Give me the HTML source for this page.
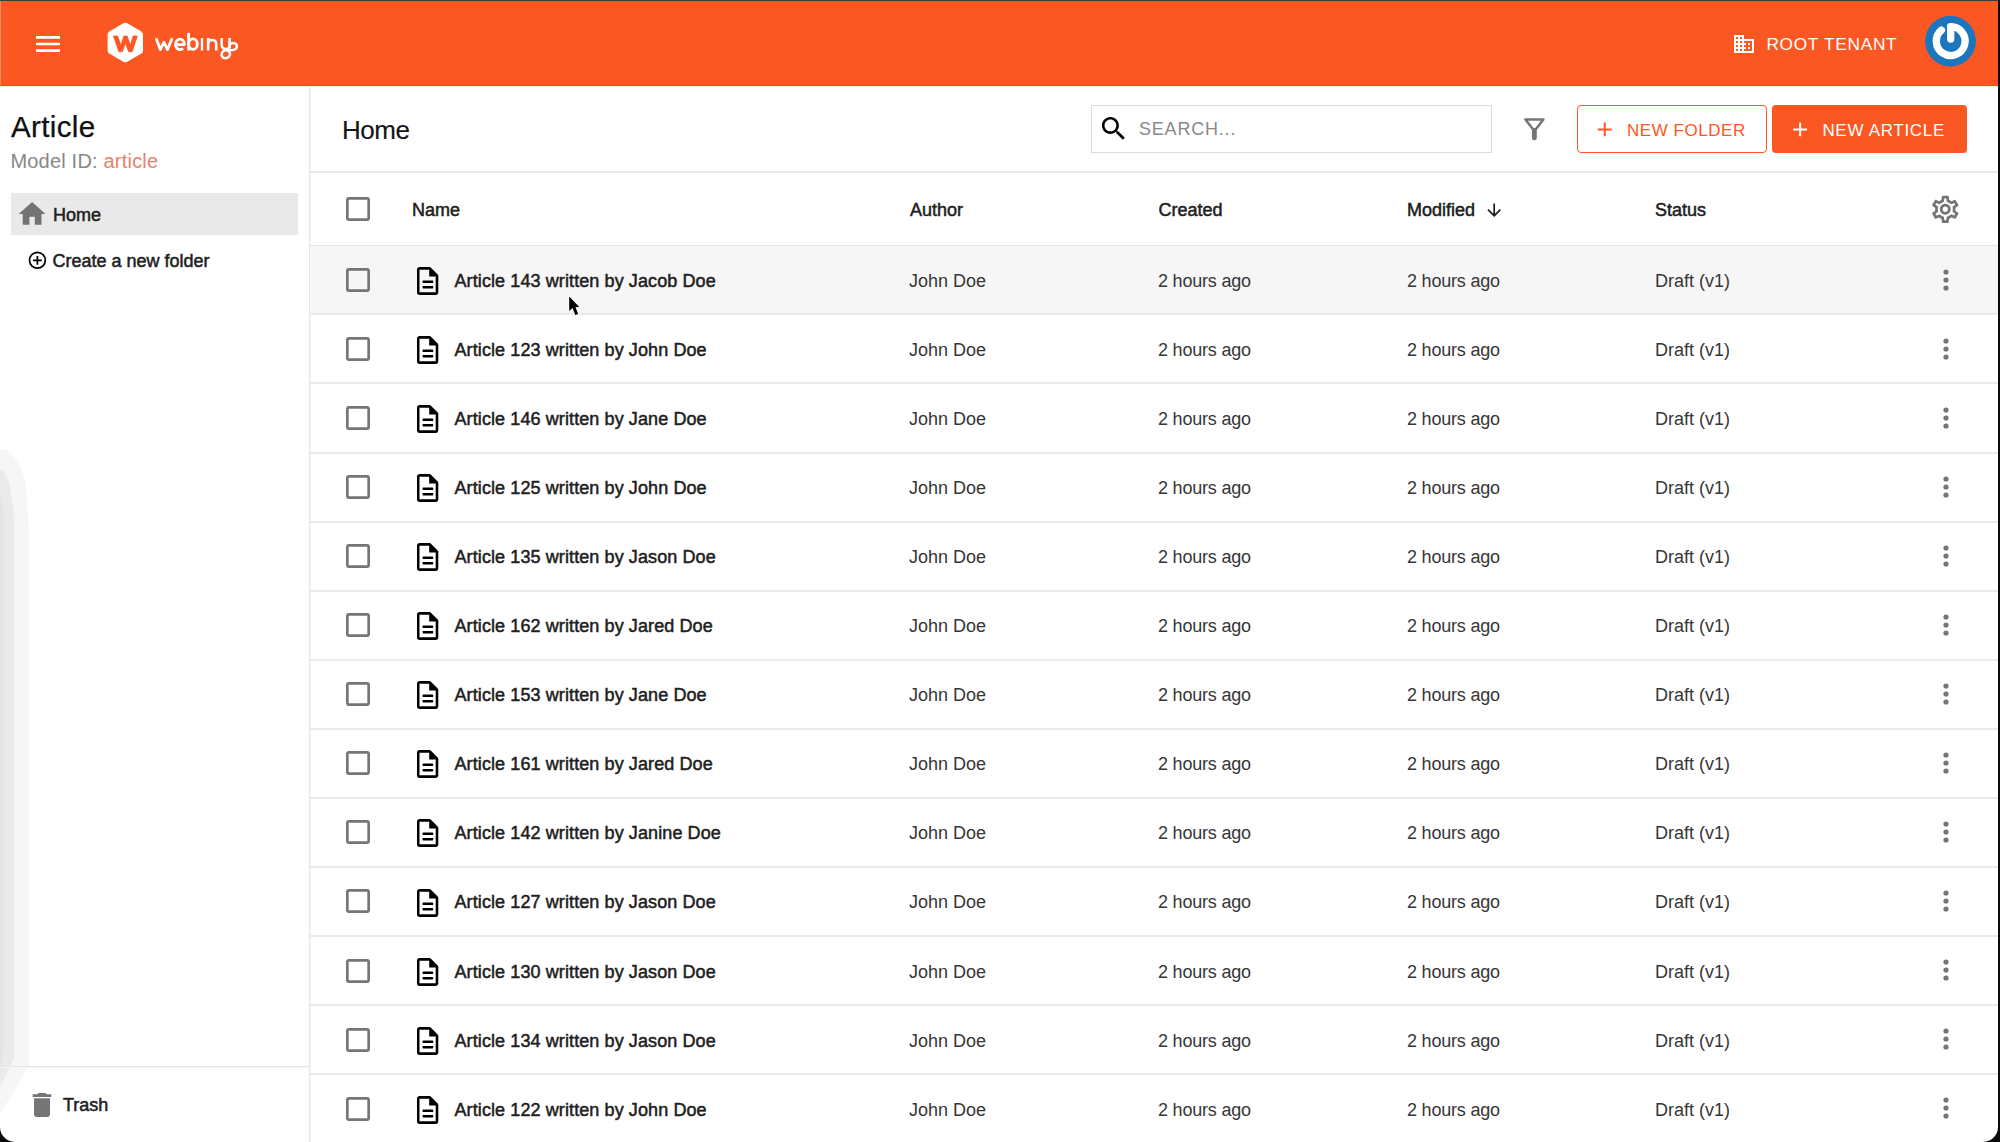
<!DOCTYPE html>
<html><head><meta charset="utf-8">
<style>
html,body{margin:0;padding:0;}
body{width:2000px;height:1142px;overflow:hidden;position:relative;background:#fff;font-family:"Liberation Sans",sans-serif;}
div{box-sizing:border-box;}
.abs{position:absolute;}
.t{position:absolute;white-space:nowrap;font-size:18px;line-height:18px;}
.sb{color:#202020;-webkit-text-stroke:0.5px #202020;}
.rg{color:#363636;}
.row{position:absolute;left:310px;width:1688px;height:67px;}
.row .cbw{position:absolute;left:32px;top:18px;width:32px;height:32px;}
.row .cbw svg{display:block;}
.row .fiw{position:absolute;left:107px;top:21.1px;}
.row .fiw svg{display:block;}
.row .name{left:144.5px;top:26px;letter-spacing:0.1px;}
.row .c1{left:599px;top:26px;}
.row .c2{left:848px;top:26px;letter-spacing:-0.2px;}
.row .c3{left:1097px;top:26px;letter-spacing:-0.2px;}
.row .c4{left:1345px;top:26px;}
.row .dw{position:absolute;left:1631.6px;top:21.6px;}
.row .dw svg{display:block;}
.hl{position:absolute;left:310px;width:1688px;height:2px;background:#eaeaea;}
</style></head><body>
<!-- frame -->
<div class="abs" style="left:0;top:0;width:2000px;height:1px;background:#3b3e40"></div>
<!-- header -->
<div class="abs" style="left:0;top:1px;width:2000px;height:85px;background:#fa5723"></div>
<div class="abs" style="left:0;top:1px;width:1px;height:85px;background:rgba(255,255,255,.3)"></div>
<div class="abs" style="left:0;top:85px;width:2000px;height:1px;background:#ec501b"></div>
<div class="abs" style="left:0;top:86px;width:2000px;height:1px;background:rgba(0,0,0,.07)"></div>
<svg class="abs" style="left:32px;top:27.7px" width="32" height="32" viewBox="0 0 24 24"><path d="M3 18h18v-2H3v2zm0-5h18v-2H3v2zm0-7v2h18V6H3z" fill="#fff"/></svg>
<!-- logo -->
<svg class="abs" style="left:100px;top:15px" width="150" height="55" viewBox="100 15 150 55">
  <polygon points="125.3,26.68 139.0,34.59 139.0,50.41 125.3,58.32 111.6,50.41 111.6,34.59" fill="#fff" stroke="#fff" stroke-width="8" stroke-linejoin="round"/>
  <polygon points="113.5,36 117.6,36 120.8,45.2 123.9,36 127.1,36 130.4,45.2 133.2,36 137.3,36 132.2,51.7 128.6,51.7 125.5,43.3 122.3,51.7 118.8,51.7" fill="#fa5723" stroke="#fa5723" stroke-width="0.8" stroke-linejoin="round"/>
  <g fill="none" stroke="#fff" stroke-width="2.8" stroke-linecap="butt" stroke-linejoin="round">
    <polyline points="156.2,38.2 160.3,49.6 163.9,42.2 167.5,49.6 172.1,38.2"/>
    <path d="M175.6 44.6H184.3A4.35 5.3 0 1 0 182.9 48.3"/>
    <path d="M188.6 32.9V50.6"/>
    <ellipse cx="193.0" cy="44.1" rx="4.3" ry="5.3"/>
    <path d="M202.0 38V50.5" stroke-width="2.3"/>
    <path d="M208.15 38V50.5M208.15 43.6C208.4 41.1 210.3 40 212.2 40C214.6 40 216.25 41.5 216.25 44.2V50.5" stroke-width="2.6"/>
    <path d="M221.7 38V45.4A3.97 3.6 0 0 0 229.65 45.4V38" stroke-width="2.5"/>
    <path d="M229.65 38V48.5M229.8 44.5C232.5 42.5 236.6 42.3 236.9 46.3C237.2 50.2 232 50.5 226 50.3C222 50.5 220.7 54 222.2 56.7C223.5 59 227.5 58.8 229.3 56.2C230.8 53.8 229.5 51.2 227.3 50.3" stroke-width="2.5"/>
  </g>
</svg>
<!-- tenant -->
<svg class="abs" style="left:1732px;top:31.7px" width="24" height="24" viewBox="0 0 24 24"><path d="M12 7V3H2v18h20V7H12zM6 19H4v-2h2v2zm0-4H4v-2h2v2zm0-4H4V9h2v2zm0-4H4V5h2v2zm4 12H8v-2h2v2zm0-4H8v-2h2v2zm0-4H8V9h2v2zm0-4H8V5h2v2zm10 12h-8v-2h2v-2h-2v-2h2v-2h-2V9h8v10zm-2-8h-2v2h2v-2zm0 4h-2v2h2v-2z" fill="#fff"/></svg>
<div class="t" style="left:1766.4px;top:36.3px;font-size:17.3px;line-height:17.3px;color:#fff;letter-spacing:0.7px">ROOT TENANT</div>
<svg class="abs" style="left:1920px;top:10px" width="60" height="62" viewBox="1920 10 60 62">
  <circle cx="1950.5" cy="41.1" r="25.4" fill="#1b76bd"/>
  <path d="M1950.7 26.7 A14.4 14.4 0 1 1 1941.4 30.1" fill="none" stroke="#fff" stroke-width="7.3" stroke-linecap="round"/>
  <path d="M1950.7 26.7 V39" fill="none" stroke="#fff" stroke-width="7.3" stroke-linecap="round"/>
</svg>
<!-- right frame edge -->
<div class="abs" style="left:1998px;top:0;width:2px;height:1142px;background:#0a0a0a"></div>

<!-- sidebar -->
<div class="abs" style="left:0;top:0;width:30px;height:1142px;background:#f6f6f6;clip-path:polygon(0 449px,7px 450px,15px 458px,21px 468px,25.7px 484px,28.9px 531px,28.9px 1066px,20px 1081px,0 1114px)"></div>
<div class="abs" style="left:0;top:0;width:30px;height:1142px;background:#eaeaea;clip-path:polygon(0 469px,3px 470px,9px 482px,13.5px 510px,14.2px 530px,14.2px 1058px,0 1087px)"></div>
<div class="abs" style="left:0;top:0;width:30px;height:1142px;background:#e4e4e4;clip-path:polygon(0 496px,3.6px 512px,3.6px 1050px,0 1075px)"></div>
<div class="abs" style="left:309px;top:86px;width:1px;height:1056px;background:#e6e6e6"></div><div class="abs" style="left:310px;top:86px;width:1px;height:1056px;background:#f5f5f5"></div>
<div class="t" style="left:10.9px;top:112.3px;font-size:29.6px;line-height:29.6px;color:#111;letter-spacing:0.35px;-webkit-text-stroke:0.25px #111">Article</div>
<div class="t" style="left:10.4px;top:151px;font-size:20px;line-height:20px;color:#888;letter-spacing:0.2px">Model ID: <span style="color:#e5826a">article</span></div>
<div class="abs" style="left:11px;top:193px;width:287px;height:42px;background:#e9e9e9"></div>
<svg class="abs" style="left:15.9px;top:197.9px" width="32.2" height="32.2" viewBox="0 0 24 24"><path d="M10 20v-6h4v6h5v-8h3L12 3 2 12h3v8z" fill="#737373"/></svg>
<div class="t sb" style="left:53px;top:205.5px">Home</div>
<svg class="abs" style="left:27px;top:250px" width="21" height="21" viewBox="27 250 21 21"><circle cx="37.4" cy="260.3" r="7.9" fill="none" stroke="#000" stroke-width="1.7"/><path d="M33 260.3h8.8M37.4 255.9v8.8" stroke="#000" stroke-width="1.7"/></svg>
<div class="t sb" style="left:52.5px;top:252px">Create a new folder</div>
<div class="abs" style="left:0;top:1066px;width:309px;height:1px;background:#e4e4e4"></div><div class="abs" style="left:0;top:1067px;width:309px;height:1px;background:#f6f6f6"></div>
<svg class="abs" style="left:26.2px;top:1088.6px" width="32" height="32" viewBox="0 0 24 24"><path d="M6 19c0 1.1.9 2 2 2h8c1.1 0 2-.9 2-2V7H6v12zM19 4h-3.5l-1-1h-5l-1 1H5v2h14V4z" fill="#757575"/></svg>
<div class="t sb" style="left:63px;top:1096px">Trash</div>

<!-- main header -->
<div class="t" style="left:342px;top:117px;font-size:26px;line-height:26px;color:#151515;letter-spacing:-0.5px;-webkit-text-stroke:0.15px #151515">Home</div>
<div class="abs" style="left:1091px;top:105px;width:401px;height:48px;border:1px solid #dcdcdc"></div>
<svg class="abs" style="left:1097.9px;top:113.1px" width="31.4" height="31.4" viewBox="0 0 24 24"><path d="M15.5 14h-.79l-.28-.27C15.41 12.59 16 11.11 16 9.5 16 5.910 13.09 3 9.5 3S3 5.91 3 9.5 5.91 16 9.5 16c1.61 0 3.09-.59 4.23-1.57l.27.28v.79l5 4.99L20.49 19l-4.99-5zm-6 0C7.01 14 5 11.99 5 9.5S7.01 5 9.5 5 14 7.01 14 9.5 11.99 14 9.5 14z" fill="#000"/></svg>
<div class="t" style="left:1139px;top:120px;color:#8a8a8a;letter-spacing:0.8px">SEARCH...</div>
<svg class="abs" style="left:1520px;top:114px" width="30" height="30" viewBox="1520 114 30 30"><path d="M1525.4 119.5h18l-9 11.6z" fill="none" stroke="#757575" stroke-width="2.5" stroke-linejoin="round"/><path d="M1534.4 130.5v7.4" stroke="#757575" stroke-width="4.8" stroke-linecap="round"/></svg>
<div class="abs" style="left:1577px;top:105px;width:190px;height:48px;border:1.5px solid #fa5723;border-radius:4px"></div>
<svg class="abs" style="left:1596px;top:121px" width="18" height="18" viewBox="1596 121 18 18"><path d="M1597.8 129.4h13.9M1604.75 122.6v13.6" stroke="#fa5723" stroke-width="2"/></svg>
<div class="t" style="left:1627px;top:121.6px;font-size:17px;line-height:17px;color:#fa5723;letter-spacing:0.55px">NEW FOLDER</div>
<div class="abs" style="left:1772px;top:105px;width:194.5px;height:48px;background:#fa5723;border-radius:4px"></div>
<svg class="abs" style="left:1791px;top:121px" width="18" height="18" viewBox="1791 121 18 18"><path d="M1793.2 129.4h13.9M1800.15 122.6v13.6" stroke="#fff" stroke-width="2"/></svg>
<div class="t" style="left:1822.4px;top:121.6px;font-size:17px;line-height:17px;color:#fff;letter-spacing:0.7px">NEW ARTICLE</div>
<div class="abs" style="left:310px;top:171px;width:1688px;height:2px;background:#e9e9e9"></div>

<!-- table header -->
<svg class="abs" style="left:342px;top:192.5px" width="32" height="32" viewBox="0 0 24 24"><path d="M19 5v14H5V5h14m0-2H5c-1.1 0-2 .9-2 2v14c0 1.1.9 2 2 2h14c1.1 0 2-.9 2-2V5c0-1.1-.9-2-2-2z" fill="#757575"/></svg>
<div class="t sb" style="left:412px;top:201px">Name</div>
<div class="t sb" style="left:910px;top:201px">Author</div>
<div class="t sb" style="left:1158.5px;top:201px">Created</div>
<div class="t sb" style="left:1407px;top:201px">Modified</div>
<svg class="abs" style="left:1483.6px;top:199.6px" width="20.4" height="20.4" viewBox="0 0 24 24"><path d="M20 12l-1.41-1.41L13 16.17V4h-2v12.17l-5.58-5.59L4 12l8 8 8-8z" fill="#1e1e1e"/></svg>
<div class="t sb" style="left:1655px;top:201px">Status</div>
<svg class="abs" style="left:1928.9px;top:192.7px" width="32.6" height="32.6" viewBox="0 0 24 24"><path d="M19.43 12.98c.04-.32.07-.64.07-.98 0-.34-.03-.66-.07-.98l2.11-1.65c.19-.15.24-.42.12-.64l-2-3.46c-.09-.16-.26-.25-.44-.25-.06 0-.12.01-.17.03l-2.49 1c-.52-.4-1.08-.73-1.690-.98l-.38-2.650C14.46 2.18 14.25 2 14 2h-4c-.25 0-.46.18-.49.42l-.38 2.65c-.61.25-1.17.59-1.69.98l-2.49-1c-.06-.02-.12-.03-.18-.03-.17 0-.34.09-.43.25l-2 3.46c-.13.22-.07.49.12.64l2.11 1.65c-.04.32-.07.65-.07.98 0 .33.03.66.07.98l-2.11 1.65c-.19.15-.24.42-.12.64l2 3.46c.09.16.26.25.44.25.06 0 .12-.01.17-.03l2.49-1c.52.4 1.08.73 1.69.98l.38 2.65c.03.24.24.42.49.42h4c.25 0 .46-.18.49-.42l.38-2.65c.61-.25 1.17-.59 1.69-.98l2.49 1c.06.02.12.03.18.03.17 0 .34-.09.43-.25l2-3.46c.12-.22.07-.49-.12-.64l-2.11-1.65zm-1.98-1.71c.04.31.05.52.05.73 0 .21-.02.43-.05.73l-.14 1.13.89.7 1.08.84-.7 1.21-1.27-.51-1.04-.42-.9.68c-.43.32-.84.56-1.25.73l-1.06.43-.16 1.13-.2 1.35h-1.4l-.19-1.35-.16-1.13-1.06-.43c-.43-.18-.83-.41-1.23-.71l-.91-.7-1.06.43-1.27.51-.7-1.21 1.08-.84.89-.7-.14-1.13c-.03-.31-.05-.54-.05-.74s.02-.43.05-.73l.14-1.13-.89-.7-1.08-.84.7-1.21 1.27.51 1.04.42.9-.68c.43-.32.84-.56 1.25-.73l1.06-.43.16-1.13.2-1.35h1.39l.19 1.35.16 1.13 1.06.43c.43.18.83.41 1.23.71l.91.7 1.06-.43 1.27-.51.7 1.21-1.07.85-.89.7.14 1.13zM12 8c-2.21 0-4 1.79-4 4s1.79 4 4 4 4-1.790 4-4-1.79-4-4-4zm0 6c-1.1 0-2-.9-2-2s.9-2 2-2 2 .9 2 2-.9 2-2 2z" fill="#757575"/></svg>
<div class="abs" style="left:310px;top:245px;width:1688px;height:1px;background:#e3e3e3"></div>

<div class="row" style="top:246.0px;background:#f6f6f6;">
  <div class="cbw"><svg class="cb" width="32" height="32" viewBox="0 0 24 24"><path d="M19 5v14H5V5h14m0-2H5c-1.1 0-2 .9-2 2v14c0 1.1.9 2 2 2h14c1.1 0 2-.9 2-2V5c0-1.1-.9-2-2-2z" fill="#757575"/></svg></div>
  <div class="fiw"><svg class="fi" width="22" height="28" viewBox="0 0 22 28"><path d="M2.6 1.4h10.2l7.2 7.2v16.4c0 .9-.6 1.6-1.4 1.6H2.6c-.8 0-1.4-.7-1.4-1.6V3c0-.9.6-1.6 1.4-1.6z" fill="none" stroke="#000" stroke-width="2.6" stroke-linejoin="round"/><path d="M12.2 1.2L20.6 9.4H12.2z" fill="#000"/><rect x="5.6" y="13.6" width="10.6" height="2.5" rx=".6" fill="#000"/><rect x="5.6" y="18.9" width="10.6" height="2.5" rx=".6" fill="#000"/></svg></div>
  <div class="t sb name">Article 143 written by Jacob Doe</div>
  <div class="t rg c1">John Doe</div>
  <div class="t rg c2">2 hours ago</div>
  <div class="t rg c3">2 hours ago</div>
  <div class="t rg c4">Draft (v1)</div>
  <div class="dw"><svg class="dots" width="8" height="24" viewBox="0 0 8 24"><circle cx="4" cy="4" r="2.6" fill="#757575"/><circle cx="4" cy="12" r="2.6" fill="#757575"/><circle cx="4" cy="20" r="2.6" fill="#757575"/></svg></div>
</div>
<div class="hl" style="top:313px"></div>
<div class="row" style="top:315.05px;">
  <div class="cbw"><svg class="cb" width="32" height="32" viewBox="0 0 24 24"><path d="M19 5v14H5V5h14m0-2H5c-1.1 0-2 .9-2 2v14c0 1.1.9 2 2 2h14c1.1 0 2-.9 2-2V5c0-1.1-.9-2-2-2z" fill="#757575"/></svg></div>
  <div class="fiw"><svg class="fi" width="22" height="28" viewBox="0 0 22 28"><path d="M2.6 1.4h10.2l7.2 7.2v16.4c0 .9-.6 1.6-1.4 1.6H2.6c-.8 0-1.4-.7-1.4-1.6V3c0-.9.6-1.6 1.4-1.6z" fill="none" stroke="#000" stroke-width="2.6" stroke-linejoin="round"/><path d="M12.2 1.2L20.6 9.4H12.2z" fill="#000"/><rect x="5.6" y="13.6" width="10.6" height="2.5" rx=".6" fill="#000"/><rect x="5.6" y="18.9" width="10.6" height="2.5" rx=".6" fill="#000"/></svg></div>
  <div class="t sb name">Article 123 written by John Doe</div>
  <div class="t rg c1">John Doe</div>
  <div class="t rg c2">2 hours ago</div>
  <div class="t rg c3">2 hours ago</div>
  <div class="t rg c4">Draft (v1)</div>
  <div class="dw"><svg class="dots" width="8" height="24" viewBox="0 0 8 24"><circle cx="4" cy="4" r="2.6" fill="#757575"/><circle cx="4" cy="12" r="2.6" fill="#757575"/><circle cx="4" cy="20" r="2.6" fill="#757575"/></svg></div>
</div>
<div class="hl" style="top:382px"></div>
<div class="row" style="top:384.1px;">
  <div class="cbw"><svg class="cb" width="32" height="32" viewBox="0 0 24 24"><path d="M19 5v14H5V5h14m0-2H5c-1.1 0-2 .9-2 2v14c0 1.1.9 2 2 2h14c1.1 0 2-.9 2-2V5c0-1.1-.9-2-2-2z" fill="#757575"/></svg></div>
  <div class="fiw"><svg class="fi" width="22" height="28" viewBox="0 0 22 28"><path d="M2.6 1.4h10.2l7.2 7.2v16.4c0 .9-.6 1.6-1.4 1.6H2.6c-.8 0-1.4-.7-1.4-1.6V3c0-.9.6-1.6 1.4-1.6z" fill="none" stroke="#000" stroke-width="2.6" stroke-linejoin="round"/><path d="M12.2 1.2L20.6 9.4H12.2z" fill="#000"/><rect x="5.6" y="13.6" width="10.6" height="2.5" rx=".6" fill="#000"/><rect x="5.6" y="18.9" width="10.6" height="2.5" rx=".6" fill="#000"/></svg></div>
  <div class="t sb name">Article 146 written by Jane Doe</div>
  <div class="t rg c1">John Doe</div>
  <div class="t rg c2">2 hours ago</div>
  <div class="t rg c3">2 hours ago</div>
  <div class="t rg c4">Draft (v1)</div>
  <div class="dw"><svg class="dots" width="8" height="24" viewBox="0 0 8 24"><circle cx="4" cy="4" r="2.6" fill="#757575"/><circle cx="4" cy="12" r="2.6" fill="#757575"/><circle cx="4" cy="20" r="2.6" fill="#757575"/></svg></div>
</div>
<div class="hl" style="top:452px"></div>
<div class="row" style="top:453.15px;">
  <div class="cbw"><svg class="cb" width="32" height="32" viewBox="0 0 24 24"><path d="M19 5v14H5V5h14m0-2H5c-1.1 0-2 .9-2 2v14c0 1.1.9 2 2 2h14c1.1 0 2-.9 2-2V5c0-1.1-.9-2-2-2z" fill="#757575"/></svg></div>
  <div class="fiw"><svg class="fi" width="22" height="28" viewBox="0 0 22 28"><path d="M2.6 1.4h10.2l7.2 7.2v16.4c0 .9-.6 1.6-1.4 1.6H2.6c-.8 0-1.4-.7-1.4-1.6V3c0-.9.6-1.6 1.4-1.6z" fill="none" stroke="#000" stroke-width="2.6" stroke-linejoin="round"/><path d="M12.2 1.2L20.6 9.4H12.2z" fill="#000"/><rect x="5.6" y="13.6" width="10.6" height="2.5" rx=".6" fill="#000"/><rect x="5.6" y="18.9" width="10.6" height="2.5" rx=".6" fill="#000"/></svg></div>
  <div class="t sb name">Article 125 written by John Doe</div>
  <div class="t rg c1">John Doe</div>
  <div class="t rg c2">2 hours ago</div>
  <div class="t rg c3">2 hours ago</div>
  <div class="t rg c4">Draft (v1)</div>
  <div class="dw"><svg class="dots" width="8" height="24" viewBox="0 0 8 24"><circle cx="4" cy="4" r="2.6" fill="#757575"/><circle cx="4" cy="12" r="2.6" fill="#757575"/><circle cx="4" cy="20" r="2.6" fill="#757575"/></svg></div>
</div>
<div class="hl" style="top:521px"></div>
<div class="row" style="top:522.2px;">
  <div class="cbw"><svg class="cb" width="32" height="32" viewBox="0 0 24 24"><path d="M19 5v14H5V5h14m0-2H5c-1.1 0-2 .9-2 2v14c0 1.1.9 2 2 2h14c1.1 0 2-.9 2-2V5c0-1.1-.9-2-2-2z" fill="#757575"/></svg></div>
  <div class="fiw"><svg class="fi" width="22" height="28" viewBox="0 0 22 28"><path d="M2.6 1.4h10.2l7.2 7.2v16.4c0 .9-.6 1.6-1.4 1.6H2.6c-.8 0-1.4-.7-1.4-1.6V3c0-.9.6-1.6 1.4-1.6z" fill="none" stroke="#000" stroke-width="2.6" stroke-linejoin="round"/><path d="M12.2 1.2L20.6 9.4H12.2z" fill="#000"/><rect x="5.6" y="13.6" width="10.6" height="2.5" rx=".6" fill="#000"/><rect x="5.6" y="18.9" width="10.6" height="2.5" rx=".6" fill="#000"/></svg></div>
  <div class="t sb name">Article 135 written by Jason Doe</div>
  <div class="t rg c1">John Doe</div>
  <div class="t rg c2">2 hours ago</div>
  <div class="t rg c3">2 hours ago</div>
  <div class="t rg c4">Draft (v1)</div>
  <div class="dw"><svg class="dots" width="8" height="24" viewBox="0 0 8 24"><circle cx="4" cy="4" r="2.6" fill="#757575"/><circle cx="4" cy="12" r="2.6" fill="#757575"/><circle cx="4" cy="20" r="2.6" fill="#757575"/></svg></div>
</div>
<div class="hl" style="top:590px"></div>
<div class="row" style="top:591.25px;">
  <div class="cbw"><svg class="cb" width="32" height="32" viewBox="0 0 24 24"><path d="M19 5v14H5V5h14m0-2H5c-1.1 0-2 .9-2 2v14c0 1.1.9 2 2 2h14c1.1 0 2-.9 2-2V5c0-1.1-.9-2-2-2z" fill="#757575"/></svg></div>
  <div class="fiw"><svg class="fi" width="22" height="28" viewBox="0 0 22 28"><path d="M2.6 1.4h10.2l7.2 7.2v16.4c0 .9-.6 1.6-1.4 1.6H2.6c-.8 0-1.4-.7-1.4-1.6V3c0-.9.6-1.6 1.4-1.6z" fill="none" stroke="#000" stroke-width="2.6" stroke-linejoin="round"/><path d="M12.2 1.2L20.6 9.4H12.2z" fill="#000"/><rect x="5.6" y="13.6" width="10.6" height="2.5" rx=".6" fill="#000"/><rect x="5.6" y="18.9" width="10.6" height="2.5" rx=".6" fill="#000"/></svg></div>
  <div class="t sb name">Article 162 written by Jared Doe</div>
  <div class="t rg c1">John Doe</div>
  <div class="t rg c2">2 hours ago</div>
  <div class="t rg c3">2 hours ago</div>
  <div class="t rg c4">Draft (v1)</div>
  <div class="dw"><svg class="dots" width="8" height="24" viewBox="0 0 8 24"><circle cx="4" cy="4" r="2.6" fill="#757575"/><circle cx="4" cy="12" r="2.6" fill="#757575"/><circle cx="4" cy="20" r="2.6" fill="#757575"/></svg></div>
</div>
<div class="hl" style="top:659px"></div>
<div class="row" style="top:660.3px;">
  <div class="cbw"><svg class="cb" width="32" height="32" viewBox="0 0 24 24"><path d="M19 5v14H5V5h14m0-2H5c-1.1 0-2 .9-2 2v14c0 1.1.9 2 2 2h14c1.1 0 2-.9 2-2V5c0-1.1-.9-2-2-2z" fill="#757575"/></svg></div>
  <div class="fiw"><svg class="fi" width="22" height="28" viewBox="0 0 22 28"><path d="M2.6 1.4h10.2l7.2 7.2v16.4c0 .9-.6 1.6-1.4 1.6H2.6c-.8 0-1.4-.7-1.4-1.6V3c0-.9.6-1.6 1.4-1.6z" fill="none" stroke="#000" stroke-width="2.6" stroke-linejoin="round"/><path d="M12.2 1.2L20.6 9.4H12.2z" fill="#000"/><rect x="5.6" y="13.6" width="10.6" height="2.5" rx=".6" fill="#000"/><rect x="5.6" y="18.9" width="10.6" height="2.5" rx=".6" fill="#000"/></svg></div>
  <div class="t sb name">Article 153 written by Jane Doe</div>
  <div class="t rg c1">John Doe</div>
  <div class="t rg c2">2 hours ago</div>
  <div class="t rg c3">2 hours ago</div>
  <div class="t rg c4">Draft (v1)</div>
  <div class="dw"><svg class="dots" width="8" height="24" viewBox="0 0 8 24"><circle cx="4" cy="4" r="2.6" fill="#757575"/><circle cx="4" cy="12" r="2.6" fill="#757575"/><circle cx="4" cy="20" r="2.6" fill="#757575"/></svg></div>
</div>
<div class="hl" style="top:728px"></div>
<div class="row" style="top:729.35px;">
  <div class="cbw"><svg class="cb" width="32" height="32" viewBox="0 0 24 24"><path d="M19 5v14H5V5h14m0-2H5c-1.1 0-2 .9-2 2v14c0 1.1.9 2 2 2h14c1.1 0 2-.9 2-2V5c0-1.1-.9-2-2-2z" fill="#757575"/></svg></div>
  <div class="fiw"><svg class="fi" width="22" height="28" viewBox="0 0 22 28"><path d="M2.6 1.4h10.2l7.2 7.2v16.4c0 .9-.6 1.6-1.4 1.6H2.6c-.8 0-1.4-.7-1.4-1.6V3c0-.9.6-1.6 1.4-1.6z" fill="none" stroke="#000" stroke-width="2.6" stroke-linejoin="round"/><path d="M12.2 1.2L20.6 9.4H12.2z" fill="#000"/><rect x="5.6" y="13.6" width="10.6" height="2.5" rx=".6" fill="#000"/><rect x="5.6" y="18.9" width="10.6" height="2.5" rx=".6" fill="#000"/></svg></div>
  <div class="t sb name">Article 161 written by Jared Doe</div>
  <div class="t rg c1">John Doe</div>
  <div class="t rg c2">2 hours ago</div>
  <div class="t rg c3">2 hours ago</div>
  <div class="t rg c4">Draft (v1)</div>
  <div class="dw"><svg class="dots" width="8" height="24" viewBox="0 0 8 24"><circle cx="4" cy="4" r="2.6" fill="#757575"/><circle cx="4" cy="12" r="2.6" fill="#757575"/><circle cx="4" cy="20" r="2.6" fill="#757575"/></svg></div>
</div>
<div class="hl" style="top:797px"></div>
<div class="row" style="top:798.4px;">
  <div class="cbw"><svg class="cb" width="32" height="32" viewBox="0 0 24 24"><path d="M19 5v14H5V5h14m0-2H5c-1.1 0-2 .9-2 2v14c0 1.1.9 2 2 2h14c1.1 0 2-.9 2-2V5c0-1.1-.9-2-2-2z" fill="#757575"/></svg></div>
  <div class="fiw"><svg class="fi" width="22" height="28" viewBox="0 0 22 28"><path d="M2.6 1.4h10.2l7.2 7.2v16.4c0 .9-.6 1.6-1.4 1.6H2.6c-.8 0-1.4-.7-1.4-1.6V3c0-.9.6-1.6 1.4-1.6z" fill="none" stroke="#000" stroke-width="2.6" stroke-linejoin="round"/><path d="M12.2 1.2L20.6 9.4H12.2z" fill="#000"/><rect x="5.6" y="13.6" width="10.6" height="2.5" rx=".6" fill="#000"/><rect x="5.6" y="18.9" width="10.6" height="2.5" rx=".6" fill="#000"/></svg></div>
  <div class="t sb name">Article 142 written by Janine Doe</div>
  <div class="t rg c1">John Doe</div>
  <div class="t rg c2">2 hours ago</div>
  <div class="t rg c3">2 hours ago</div>
  <div class="t rg c4">Draft (v1)</div>
  <div class="dw"><svg class="dots" width="8" height="24" viewBox="0 0 8 24"><circle cx="4" cy="4" r="2.6" fill="#757575"/><circle cx="4" cy="12" r="2.6" fill="#757575"/><circle cx="4" cy="20" r="2.6" fill="#757575"/></svg></div>
</div>
<div class="hl" style="top:866px"></div>
<div class="row" style="top:867.45px;">
  <div class="cbw"><svg class="cb" width="32" height="32" viewBox="0 0 24 24"><path d="M19 5v14H5V5h14m0-2H5c-1.1 0-2 .9-2 2v14c0 1.1.9 2 2 2h14c1.1 0 2-.9 2-2V5c0-1.1-.9-2-2-2z" fill="#757575"/></svg></div>
  <div class="fiw"><svg class="fi" width="22" height="28" viewBox="0 0 22 28"><path d="M2.6 1.4h10.2l7.2 7.2v16.4c0 .9-.6 1.6-1.4 1.6H2.6c-.8 0-1.4-.7-1.4-1.6V3c0-.9.6-1.6 1.4-1.6z" fill="none" stroke="#000" stroke-width="2.6" stroke-linejoin="round"/><path d="M12.2 1.2L20.6 9.4H12.2z" fill="#000"/><rect x="5.6" y="13.6" width="10.6" height="2.5" rx=".6" fill="#000"/><rect x="5.6" y="18.9" width="10.6" height="2.5" rx=".6" fill="#000"/></svg></div>
  <div class="t sb name">Article 127 written by Jason Doe</div>
  <div class="t rg c1">John Doe</div>
  <div class="t rg c2">2 hours ago</div>
  <div class="t rg c3">2 hours ago</div>
  <div class="t rg c4">Draft (v1)</div>
  <div class="dw"><svg class="dots" width="8" height="24" viewBox="0 0 8 24"><circle cx="4" cy="4" r="2.6" fill="#757575"/><circle cx="4" cy="12" r="2.6" fill="#757575"/><circle cx="4" cy="20" r="2.6" fill="#757575"/></svg></div>
</div>
<div class="hl" style="top:935px"></div>
<div class="row" style="top:936.5px;">
  <div class="cbw"><svg class="cb" width="32" height="32" viewBox="0 0 24 24"><path d="M19 5v14H5V5h14m0-2H5c-1.1 0-2 .9-2 2v14c0 1.1.9 2 2 2h14c1.1 0 2-.9 2-2V5c0-1.1-.9-2-2-2z" fill="#757575"/></svg></div>
  <div class="fiw"><svg class="fi" width="22" height="28" viewBox="0 0 22 28"><path d="M2.6 1.4h10.2l7.2 7.2v16.4c0 .9-.6 1.6-1.4 1.6H2.6c-.8 0-1.4-.7-1.4-1.6V3c0-.9.6-1.6 1.4-1.6z" fill="none" stroke="#000" stroke-width="2.6" stroke-linejoin="round"/><path d="M12.2 1.2L20.6 9.4H12.2z" fill="#000"/><rect x="5.6" y="13.6" width="10.6" height="2.5" rx=".6" fill="#000"/><rect x="5.6" y="18.9" width="10.6" height="2.5" rx=".6" fill="#000"/></svg></div>
  <div class="t sb name">Article 130 written by Jason Doe</div>
  <div class="t rg c1">John Doe</div>
  <div class="t rg c2">2 hours ago</div>
  <div class="t rg c3">2 hours ago</div>
  <div class="t rg c4">Draft (v1)</div>
  <div class="dw"><svg class="dots" width="8" height="24" viewBox="0 0 8 24"><circle cx="4" cy="4" r="2.6" fill="#757575"/><circle cx="4" cy="12" r="2.6" fill="#757575"/><circle cx="4" cy="20" r="2.6" fill="#757575"/></svg></div>
</div>
<div class="hl" style="top:1004px"></div>
<div class="row" style="top:1005.55px;">
  <div class="cbw"><svg class="cb" width="32" height="32" viewBox="0 0 24 24"><path d="M19 5v14H5V5h14m0-2H5c-1.1 0-2 .9-2 2v14c0 1.1.9 2 2 2h14c1.1 0 2-.9 2-2V5c0-1.1-.9-2-2-2z" fill="#757575"/></svg></div>
  <div class="fiw"><svg class="fi" width="22" height="28" viewBox="0 0 22 28"><path d="M2.6 1.4h10.2l7.2 7.2v16.4c0 .9-.6 1.6-1.4 1.6H2.6c-.8 0-1.4-.7-1.4-1.6V3c0-.9.6-1.6 1.4-1.6z" fill="none" stroke="#000" stroke-width="2.6" stroke-linejoin="round"/><path d="M12.2 1.2L20.6 9.4H12.2z" fill="#000"/><rect x="5.6" y="13.6" width="10.6" height="2.5" rx=".6" fill="#000"/><rect x="5.6" y="18.9" width="10.6" height="2.5" rx=".6" fill="#000"/></svg></div>
  <div class="t sb name">Article 134 written by Jason Doe</div>
  <div class="t rg c1">John Doe</div>
  <div class="t rg c2">2 hours ago</div>
  <div class="t rg c3">2 hours ago</div>
  <div class="t rg c4">Draft (v1)</div>
  <div class="dw"><svg class="dots" width="8" height="24" viewBox="0 0 8 24"><circle cx="4" cy="4" r="2.6" fill="#757575"/><circle cx="4" cy="12" r="2.6" fill="#757575"/><circle cx="4" cy="20" r="2.6" fill="#757575"/></svg></div>
</div>
<div class="hl" style="top:1073px"></div>
<div class="row" style="top:1074.6px;">
  <div class="cbw"><svg class="cb" width="32" height="32" viewBox="0 0 24 24"><path d="M19 5v14H5V5h14m0-2H5c-1.1 0-2 .9-2 2v14c0 1.1.9 2 2 2h14c1.1 0 2-.9 2-2V5c0-1.1-.9-2-2-2z" fill="#757575"/></svg></div>
  <div class="fiw"><svg class="fi" width="22" height="28" viewBox="0 0 22 28"><path d="M2.6 1.4h10.2l7.2 7.2v16.4c0 .9-.6 1.6-1.4 1.6H2.6c-.8 0-1.4-.7-1.4-1.6V3c0-.9.6-1.6 1.4-1.6z" fill="none" stroke="#000" stroke-width="2.6" stroke-linejoin="round"/><path d="M12.2 1.2L20.6 9.4H12.2z" fill="#000"/><rect x="5.6" y="13.6" width="10.6" height="2.5" rx=".6" fill="#000"/><rect x="5.6" y="18.9" width="10.6" height="2.5" rx=".6" fill="#000"/></svg></div>
  <div class="t sb name">Article 122 written by John Doe</div>
  <div class="t rg c1">John Doe</div>
  <div class="t rg c2">2 hours ago</div>
  <div class="t rg c3">2 hours ago</div>
  <div class="t rg c4">Draft (v1)</div>
  <div class="dw"><svg class="dots" width="8" height="24" viewBox="0 0 8 24"><circle cx="4" cy="4" r="2.6" fill="#757575"/><circle cx="4" cy="12" r="2.6" fill="#757575"/><circle cx="4" cy="20" r="2.6" fill="#757575"/></svg></div>
</div>
<div class="hl" style="top:1142px"></div>

<!-- cursor -->
<svg class="abs" style="left:563px;top:291px" width="24" height="30" viewBox="563 291 24 30">
  <path d="M569.2 296.5V311L572.6 308.1L575.2 315L578.2 313.9L575.5 307.3L579.3 306.9Z" fill="#000" stroke="#fff" stroke-width="2.4" stroke-linejoin="round" paint-order="stroke"/>
</svg>
<!-- bottom corners -->
<svg class="abs" style="left:0;top:1127px" width="15" height="15" viewBox="0 0 15 15"><path d="M0 0V15H15A15 15 0 0 1 0 0z" fill="#0a0a0a"/></svg>
<svg class="abs" style="left:1983px;top:1127px" width="17" height="15" viewBox="0 0 17 15"><path d="M17 0V15H0A15 15 0 0 0 15 0z" fill="#0a0a0a"/></svg>
</body></html>
